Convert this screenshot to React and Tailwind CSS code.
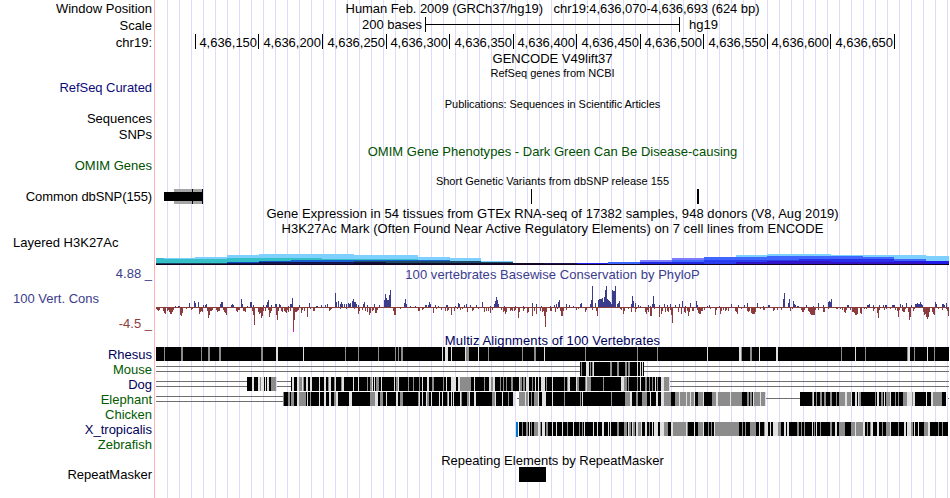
import React from 'react';
import clsx from 'clsx';

const LEFT = 156;
const WIDTH = 794;

const TICKS = [195, 258, 322, 386, 449, 513, 576, 640, 703, 767, 830, 894];

// shade + x (+ :width), drawn over a solid black block
const SHADES = { b: '#000000', g: '#8c8c8c', l: '#e1e1e1', w: '#ffffff' };

const RHESUS = 'g164 g181:2 g201 g208:2 g219:2 g261:2 l276:2 l303 g345 g358 g378 g395 g398 g401:2 l442 l445:3 l451 l465 g466:3 l478 g488 g522 g534:2 l544 g585 g637 g657 l707 l739:2 g741 g750:2 l759 l776:2 g841 l855 g865 g907 l908:2 g914 l927 g934';

const MOUSE = 'g581 l586:3 g590 g592 l593 g610:2 g617:2 g625:2 g628:2 l637 l640 l642';

const DOG = 'l292:2 l297:2 g299:3 l302 g303 l306:2 l310:2 l319 l324:2 g328 l329:2 g334 l335 g341 l342:2 l353 l358 g367 g370:2 l372 l374 g376:3 l381 l394 g396:2 l398 g408 g413 g419 l422 l427:2 g432:2 g443 l446 l451:5 l458:2 g460:11 l474 g484 l489:2 g491:2 l493:2 g500 g503 g506 g511:2 l519 g520:2 g523:2 l526:3 g532 l535 l538 l541:4 g546 l552 g564 g567 l568:2 l576 g577:2 g585 l586 g587:4 g603 l621:3 g624:3 g628 g637 l640 g645:2 g649 g652 l655 g657 l661:3 g664:5 l669';
const DOG_SHORT = 'l252:2 l258:2 g260 l261:3 l265 l267:2 g271:5 l276';

const ELEPHANT_A = 'g283 g288:2 g291 g292:2 l297:2 g299:7 l307 g310 l319 l324:2 l329:2 g334:2 l336:2 l349:3 g370:2 g372:3 l375:3 g380:3 l386 l396:2 g400:3 g418 l419 l422 l426 g427:2 l431 l439 l442 g447 l448 l451 l453 l460 g461 g467:2 l469 l474:2 g492:3 l495 l502 g508 l513:2';
const ELEPHANT_B = 'g519:6 l525 g526:2 l528 g531 g534:4 l538 l542:4 l552 g564 g580 l582 g611 g625:5 l630:2 g636:2 g642:5 l650 l656:2 l661:3 g664:7 g675:4 l679 g680:6 l686 g687:3 l690 g691:3 l694 g698:5 l703 g712:4 l716:2 g718:12 l730 g731:11 g747:2 g750:2 l753 g754:6 l760 g761:4 l765';
const ELEPHANT_C = 'g812 l813 g816 g820:2 g824:2 g830:2 g836 g839:6 l845:2 g847:4 l851 l855:2 l858 g859:2 g875 l877:2 g881:2 l884 g886:4 l890 g895 g898 g903:4 l907:5 g912 l913:2 l926 l931:2 g933:9';

const XTROP = 'g522 g526:2 l529 g531 g534:4 l538:2 g540 l542:3 g546:2 l552 l556 l562 g567 l573 g579 g582 l584 l593 l597 l602:2 l608 l610 g617:2 g624:3 l628 g629:2 l632 g633:2 l636:2 g638:3 l641 l645:2 g649 l652 l654:4 l660:4 g664:4 l671:2 g673:13 l686 g687 l694 g698:5 l703 g708 g711 l714 g715:24 g742 g745 g750:6 l759 g764 l765:3 l770 l773:5 g778:3 l784:2 l787:2 g797:2 g801 g804 l812 g814 l816 g820 g830:2 l835:2 g839:6 g851:4 l855 g856:7 l863:2 g867 g870 l871:2 l877:2 g882 g886:4 l890 g898 l904:2 l907:4 g911:2 l914 l918 g924:4 l928:2 g938 g942 w948';

// per-base scores: x:height
const POSITIVE = '175:1 178:1 179:1 189:4 194:6 195:4 198:5 203:2 205:2 206:3 220:3 221:5 222:5 231:2 232:3 233:2 241:8 242:3 247:1 250:5 251:5 253:2 263:2 266:2 267:5 268:7 271:2 275:3 276:3 279:3 280:2 288:1 290:3 291:3 292:9 299:2 309:4 316:1 317:1 321:2 325:2 327:3 335:14 336:5 338:6 340:3 341:5 342:3 344:3 346:3 348:4 349:3 350:4 352:6 353:8 354:5 355:5 356:3 358:2 363:3 364:5 367:2 374:3 379:2 384:7 385:13 386:9 387:7 388:7 389:12 390:17 404:4 405:8 406:3 410:1 415:1 425:2 426:2 428:2 429:5 430:3 435:2 438:1 446:2 447:2 455:1 458:4 459:3 464:2 466:3 470:2 476:2 482:5 490:1 494:3 495:6 496:10 497:7 498:3 504:1 515:1 523:1 532:4 536:3 541:1 550:1 554:2 556:3 558:5 559:7 566:3 569:2 573:1 580:3 581:4 590:3 591:7 592:21 595:4 598:7 599:8 600:8 601:8 602:9 603:5 604:10 605:17 606:21 607:8 608:7 609:6 610:5 611:3 612:17 613:16 614:16 615:21 617:3 618:4 619:6 631:3 632:11 633:6 635:4 638:2 640:1 648:2 650:1 652:3 653:11 654:3 659:2 664:3 667:2 670:3 675:2 679:3 682:6 685:1 690:4 696:6 697:2 707:1 709:2 719:1 731:3 738:2 744:2 747:4 757:4 763:1 768:2 769:2 783:8 784:14 788:4 789:8 793:6 794:3 795:2 797:1 798:1 806:2 813:1 818:4 823:2 828:5 829:6 830:5 831:8 847:2 848:2 867:2 868:2 869:3 873:2 879:2 883:2 885:2 886:2 892:2 893:2 894:2 900:3 902:2 906:4 911:2 915:3 916:3 917:4 918:3 919:3 920:5 921:3 922:2 935:5 936:3 942:3 943:3 944:2 946:4';

const NEGATIVE = '156:1 157:2 158:3 159:2 163:3 164:5 165:6 167:3 168:2 169:4 170:6 171:6 172:4 173:2 180:7 181:8 182:5 186:1 191:2 192:1 199:6 200:4 201:3 202:4 207:3 208:10 209:7 210:3 211:3 212:2 216:2 217:4 218:3 219:3 223:2 224:4 225:5 226:7 236:3 237:4 238:2 239:2 243:3 244:3 245:4 252:3 253:7 254:17 258:4 259:6 260:5 261:10 262:8 263:3 265:3 268:2 269:9 270:5 271:3 276:7 277:12 278:3 281:3 282:4 284:3 285:4 286:5 287:2 288:4 290:3 293:24 294:12 295:4 296:4 297:3 298:2 301:5 302:2 304:3 307:9 310:1 313:3 314:3 329:3 330:2 331:1 340:1 346:1 354:1 358:6 359:3 362:2 365:3 367:4 369:7 370:5 372:3 373:2 375:5 376:5 377:2 393:3 394:7 395:7 400:1 418:3 419:3 422:2 423:1 433:5 436:1 441:2 445:3 447:3 448:2 451:7 454:3 457:1 460:2 462:1 467:4 472:3 473:2 478:1 484:4 486:3 488:3 490:5 492:2 501:2 503:4 504:3 505:6 506:4 510:3 511:2 512:3 514:3 515:2 518:10 519:4 523:3 524:1 527:5 528:4 532:8 534:3 536:6 540:3 542:4 543:3 544:8 545:19 546:4 550:3 551:3 555:4 557:1 560:3 561:8 562:8 563:3 566:2 576:2 578:1 585:4 586:2 592:2 596:3 597:8 620:1 621:2 623:6 624:3 628:1 631:4 635:4 636:1 645:4 646:6 647:2 648:4 650:8 651:8 654:1 659:9 661:6 662:3 665:4 667:3 668:4 670:2 671:7 672:15 678:4 681:6 684:4 685:5 687:3 688:8 689:4 692:3 693:3 697:2 698:5 699:6 700:6 701:3 702:3 704:2 710:1 715:7 716:2 720:6 721:3 723:2 725:3 726:2 728:3 735:3 736:4 737:6 741:1 747:3 748:4 749:3 751:5 752:6 753:6 754:6 755:4 760:1 763:2 764:2 773:3 774:2 777:2 781:2 790:3 792:1 801:2 802:4 803:4 804:2 808:3 809:4 810:6 811:7 812:7 813:7 814:7 815:2 818:2 823:4 824:4 828:1 836:1 837:1 840:1 842:2 844:4 845:5 846:2 850:2 852:4 853:4 854:5 855:7 856:7 857:6 860:5 861:6 864:1 866:1 873:3 874:1 877:5 878:10 879:2 884:2 886:1 890:1 895:2 897:3 898:9 899:2 902:3 903:4 904:4 905:1 908:4 909:12 910:9 913:3 914:1 923:4 924:7 925:6 926:9 927:11 928:9 929:4 932:4 933:6 934:7 938:1 942:2 946:1 947:3 948:8';

// stacked histone signals, x0 / x1 / top / colour, each filled down to the floor
const H3K27AC = [
  [156, 164, 258, '#35c0cc'],
  [164, 195, 258, '#7dd0ff'],
  [195, 227, 257, '#7dd0ff'],
  [227, 259, 255, '#7dd0ff'],
  [259, 354, 254, '#7dd0ff'],
  [354, 418, 255, '#7dd0ff'],
  [418, 450, 257, '#7dd0ff'],
  [450, 481, 258, '#7dd0ff'],
  [481, 513, 261, '#7dd0ff'],
  [156, 227, 259, '#35c0c8'],
  [227, 322, 258, '#35c0c8'],
  [322, 418, 259, '#35c0c8'],
  [156, 227, 263, '#1a4560'],
  [227, 259, 262, '#0e50c0'],
  [259, 291, 261, '#0e50c0'],
  [291, 354, 260, '#1a5fd0'],
  [354, 450, 260, '#1a5fd0'],
  [354, 481, 261, '#1d4a62'],
  [481, 513, 262, '#1d4a62'],
  [227, 259, 263, '#141450'],
  [259, 386, 262, '#141450'],
  [544, 577, 263, '#1e1250'],
  [577, 608, 263, '#2222f0'],
  [608, 640, 262, '#3c64ff'],
  [640, 672, 260, '#7d7dff'],
  [672, 704, 258, '#7d7dff'],
  [672, 704, 260, '#3f66ff'],
  [736, 767, 255, '#7dd0ff'],
  [767, 831, 254, '#7dd0ff'],
  [831, 926, 255, '#7dd0ff'],
  [926, 949, 256, '#7dd0ff'],
  [704, 767, 257, '#3f66ff'],
  [767, 863, 256, '#3f66ff'],
  [863, 894, 257, '#3f66ff'],
  [894, 926, 259, '#3f66ff'],
  [640, 704, 262, '#1e28e0'],
  [704, 799, 260, '#2a3cf0'],
  [799, 894, 259, '#2a2fee'],
  [894, 949, 261, '#2218e8'],
  [736, 767, 262, '#3214c8'],
  [767, 831, 261, '#3214c8'],
  [831, 926, 262, '#3214c8'],
];

const parseShades = (str) =>
  str.split(' ').map((t) => {
    const [x, w] = t.slice(1).split(':');
    return { shade: SHADES[t[0]], x: +x, w: +(w || 1) };
  });

const parseScores = (str) => str.split(' ').map((t) => t.split(':').map(Number));

const Canvas = ({ y, h, children }) => (
  <svg className="block" width={WIDTH} height={h} viewBox={`${LEFT} ${y} ${WIDTH} ${h}`} shapeRendering="crispEdges">
    {children}
  </svg>
);

const Block = ({ x, end, stripes, h = 14 }) => (
  <g>
    <rect x={x} y={0} width={end - x} height={h} fill="#000" />
    {parseShades(stripes).map((s) => (
      <rect key={s.x} x={s.x} y={0} width={s.w} height={h} fill={s.shade} />
    ))}
  </g>
);

const Chain = ({ x, end, rows = [4, 9] }) =>
  rows.map((y) => <rect key={y} x={x} y={y} width={end - x} height={1} fill="#6e6e6e" />);

const ScaleBar = () => (
  <div className="flex h-full items-center pl-[206px]">
    <span className="w-[60px] whitespace-nowrap">200 bases</span>
    <div className="mb-px ml-[3px] flex h-[15px] w-[255px] items-center border-x border-black">
      <div className="h-px w-full bg-black" />
    </div>
    <span className="pl-[9px]">hg19</span>
  </div>
);

const Ruler = () => (
  <div className="flex h-full items-start pt-px">
    {TICKS.map((x, i) => (
      <div
        key={x}
        className="h-[15px] shrink-0 border-r border-black pr-px text-right leading-[17px] tracking-[-0.03px]"
        style={{ width: i === 0 ? x + 1 - LEFT : x - TICKS[i - 1] }}
      >
        {i > 0 && `4,636,${100 + i * 50}`}
      </div>
    ))}
  </div>
);

const Snps = () => (
  <Canvas y={0} h={15}>
    <rect x={174} y={0} width={29} height={15} fill="#a5a5a5" />
    <rect x={164} y={3} width={39} height={9} fill="#000" />
    <rect x={192} y={0} width={1} height={15} fill="#000" />
    <rect x={202} y={0} width={1} height={15} fill="#000" />
    <rect x={531} y={0} width={1} height={15} fill="#000" />
    <rect x={697} y={0} width={2} height={15} fill="#000" />
  </Canvas>
);

const Histone = () => (
  <Canvas y={236} h={30}>
    {H3K27AC.map(([x0, x1, top, fill], i) => (
      <rect key={i} x={x0} y={top} width={x1 - x0} height={264 - top} fill={fill} />
    ))}
    <rect x={354} y={263} width={190} height={1} fill="#120a28" />
    <rect x={156} y={264} width={793} height={1} fill="#12001e" />
  </Canvas>
);

const Conservation = () => (
  <Canvas y={281} h={52}>
    <rect x={156} y={307} width={793} height={1} fill="#8c3c3c" />
    {parseScores(POSITIVE).map(([x, h]) => (
      <rect key={x} x={x} y={307 - h} width={1} height={h} fill="#3c3c8c" />
    ))}
    {parseScores(NEGATIVE).map(([x, h]) => (
      <rect key={x} x={x} y={307} width={1} height={h + 1} fill="#8c3c3c" />
    ))}
    <rect x={293} y={330} width={1} height={2} fill="#ff00ff" />
  </Canvas>
);

const NAVY = 'text-[#0c0c78]';
const BLUE = 'text-[#00005a]';
const GREEN = 'text-[#005a00]';
const PHYLO = 'text-[#3c3c8c]';

const ROWS = [
  { h: 17, label: 'Window Position', title: <>Human Feb. 2009 (GRCh37/hg19)&nbsp;&nbsp; chr19:4,636,070-4,636,693 (624 bp)</>, titleClass: 'tracking-[-0.07px]' },
  { h: 16, label: 'Scale', labelClass: 'translate-y-px', track: <ScaleBar /> },
  { h: 18, label: 'chr19:', labelClass: 'translate-y-px', track: <Ruler /> },
  { h: 15, title: 'GENCODE V49lift37' },
  { h: 14, title: 'RefSeq genes from NCBI', small: true },
  { h: 16, label: 'RefSeq Curated', color: NAVY, labelClass: 'tracking-[-0.05px]' },
  { h: 16, title: 'Publications: Sequences in Scientific Articles', small: true, titleClass: 'tracking-[-0.05px]' },
  { h: 14, label: 'Sequences' },
  { h: 17, label: 'SNPs' },
  { h: 16, title: 'OMIM Gene Phenotypes - Dark Green Can Be Disease-causing', titleClass: 'translate-y-px tracking-[0.02px] text-[#005000]' },
  { h: 15, label: 'OMIM Genes', color: 'text-[#005000]', labelClass: '-translate-y-px' },
  { h: 15, title: 'Short Genetic Variants from dbSNP release 155', small: true },
  { h: 15, label: 'Common dbSNP(155)', labelClass: 'tracking-[-0.1px]', track: <Snps /> },
  { h: 17, title: 'Gene Expression in 54 tissues from GTEx RNA-seq of 17382 samples, 948 donors (V8, Aug 2019)', titleClass: 'translate-y-px tracking-[0.055px]' },
  { h: 15, title: 'H3K27Ac Mark (Often Found Near Active Regulatory Elements) on 7 cell lines from ENCODE', titleClass: 'tracking-[0.05px]' },
  { h: 30, side: <div className="pl-[13px] leading-[14px]">Layered H3K27Ac</div>, track: <Histone /> },
  { h: 15, label: '4.88 _', color: PHYLO, title: '100 vertebrates Basewise Conservation by PhyloP', titleClass: 'translate-y-px pr-[2px] tracking-[0.05px] text-[#3c3c8c]' },
  {
    h: 52,
    side: (
      <div className="flex h-full flex-col justify-between pt-[10px] pb-px">
        <div className="pl-[13px] leading-[16px] text-[#3c3c8c]">100 Vert. Cons</div>
        <div className="pr-[2px] text-right leading-[16px] text-[#8c3c3c]">-4.5 _</div>
      </div>
    ),
    track: <Conservation />,
  },
  { h: 14, title: 'Multiz Alignments of 100 Vertebrates', titleClass: 'translate-y-px tracking-[0.12px] text-[#00005a]' },
  { h: 15, label: 'Rhesus', color: BLUE, track: <Canvas y={0} h={15}><Block x={156} end={949} stripes={RHESUS} /></Canvas> },
  {
    h: 15,
    label: 'Mouse',
    color: GREEN,
    track: (
      <Canvas y={0} h={15}>
        <Chain x={156} end={580} />
        <Block x={580} end={644} stripes={MOUSE} />
        <Chain x={644} end={949} />
      </Canvas>
    ),
  },
  {
    h: 15,
    label: 'Dog',
    color: BLUE,
    track: (
      <Canvas y={0} h={15}>
        <Chain x={156} end={247} />
        <Chain x={277} end={291} />
        <Chain x={670} end={949} />
        <Block x={247} end={277} stripes={DOG_SHORT} />
        <Block x={291} end={670} stripes={DOG} />
      </Canvas>
    ),
  },
  {
    h: 15,
    label: 'Elephant',
    color: GREEN,
    track: (
      <Canvas y={0} h={15}>
        <Chain x={156} end={283} />
        <Chain x={517} end={519} rows={[6]} />
        <Chain x={766} end={800} rows={[6]} />
        <Chain x={948} end={949} rows={[6]} />
        <Block x={283} end={515} stripes={ELEPHANT_A} />
        <Block x={519} end={766} stripes={ELEPHANT_B} />
        <Block x={800} end={946} stripes={ELEPHANT_C} />
      </Canvas>
    ),
  },
  { h: 15, label: 'Chicken', color: GREEN },
  {
    h: 15,
    label: 'X_tropicalis',
    color: BLUE,
    track: (
      <Canvas y={0} h={15}>
        <rect x={516} y={0} width={2} height={15} fill="#0078d2" />
        <Block x={519} end={949} stripes={XTROP} />
      </Canvas>
    ),
  },
  { h: 15, label: 'Zebrafish', color: GREEN },
  { h: 15, title: 'Repeating Elements by RepeatMasker', titleClass: 'translate-y-px' },
  { h: 15, label: 'RepeatMasker', track: <Canvas y={0} h={15}><rect x={519} y={0} width={27} height={15} fill="#000" /></Canvas> },
];

const App = () => (
  <div className="flex h-[498px] w-[950px] overflow-hidden bg-white font-['Liberation_Sans',Arial,sans-serif] text-[13px] text-black">
    {/* Track labels */}
    <div className="w-[154px] shrink-0">
      {ROWS.map((row, i) => (
        <div key={i} style={{ height: row.h, lineHeight: `${row.h}px` }} className={clsx('whitespace-nowrap', row.color)}>
          {row.side || <div className={clsx('pr-[2px] text-right', row.labelClass)}>{row.label}</div>}
        </div>
      ))}
    </div>

    {/* Tracks, with guide lines every 12px */}
    <div className="w-[796px] shrink-0 border-l border-[#ffb4b4] bg-[linear-gradient(to_right,#dcdcfa_1px,transparent_1px)] bg-[length:12px_100%] bg-[position:11px_0] bg-clip-content bg-origin-content pl-px">
      {ROWS.map((row, i) => (
        <div key={i} style={{ height: row.h, lineHeight: `${row.h}px` }} className="whitespace-nowrap">
          {row.title && <div className={clsx('pr-px text-center', row.small && 'text-[11px]', row.titleClass)}>{row.title}</div>}
          {row.track}
        </div>
      ))}
    </div>
  </div>
);

export default App;
